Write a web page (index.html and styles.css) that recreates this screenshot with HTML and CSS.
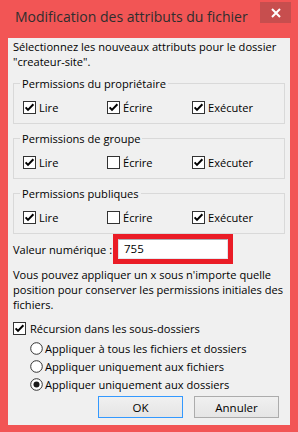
FILE: index.html
```html
<!DOCTYPE html>
<html lang="fr">
<head>
<meta charset="utf-8">
<title>Modification des attributs du fichier</title>
<link rel="stylesheet" href="styles.css">
</head>
<body>
<div class="window">
  <div class="titlebar">
    <div class="title">Modification des attributs du fichier</div>
    <div class="close"><svg width="10" height="10" viewBox="0 0 10 10"><path d="M1 1 L9 9 M9 1 L1 9" stroke="#fff" stroke-width="2" fill="none"/></svg></div>
  </div>
  <div class="client">
    <p class="intro">Sélectionnez les nouveaux attributs pour le dossier "createur-site".</p>

    <fieldset class="group">
      <legend>Permissions du propriétaire</legend>
      <div class="row">
        <span class="opt"><span class="cb"><svg width="13" height="13" viewBox="0 0 13 13"><rect x="0.5" y="0.5" width="12" height="12" fill="#fff" stroke="#333"/><path d="M2.6 6.4 L5 8.9 L10.4 3.2" stroke="#000" stroke-width="2" fill="none"/></svg></span>Lire</span>
        <span class="opt"><span class="cb"><svg width="13" height="13" viewBox="0 0 13 13"><rect x="0.5" y="0.5" width="12" height="12" fill="#fff" stroke="#333"/><path d="M2.6 6.4 L5 8.9 L10.4 3.2" stroke="#000" stroke-width="2" fill="none"/></svg></span>Écrire</span>
        <span class="opt"><span class="cb"><svg width="13" height="13" viewBox="0 0 13 13"><rect x="0.5" y="0.5" width="12" height="12" fill="#fff" stroke="#333"/><path d="M2.6 6.4 L5 8.9 L10.4 3.2" stroke="#000" stroke-width="2" fill="none"/></svg></span>Exécuter</span>
      </div>
    </fieldset>

    <fieldset class="group">
      <legend>Permissions de groupe</legend>
      <div class="row">
        <span class="opt"><span class="cb"><svg width="13" height="13" viewBox="0 0 13 13"><rect x="0.5" y="0.5" width="12" height="12" fill="#fff" stroke="#333"/><path d="M2.6 6.4 L5 8.9 L10.4 3.2" stroke="#000" stroke-width="2" fill="none"/></svg></span>Lire</span>
        <span class="opt"><span class="cb"><svg width="13" height="13" viewBox="0 0 13 13"><rect x="0.5" y="0.5" width="12" height="12" fill="#fff" stroke="#333"/></svg></span>Écrire</span>
        <span class="opt"><span class="cb"><svg width="13" height="13" viewBox="0 0 13 13"><rect x="0.5" y="0.5" width="12" height="12" fill="#fff" stroke="#333"/><path d="M2.6 6.4 L5 8.9 L10.4 3.2" stroke="#000" stroke-width="2" fill="none"/></svg></span>Exécuter</span>
      </div>
    </fieldset>

    <fieldset class="group">
      <legend>Permissions publiques</legend>
      <div class="row">
        <span class="opt"><span class="cb"><svg width="13" height="13" viewBox="0 0 13 13"><rect x="0.5" y="0.5" width="12" height="12" fill="#fff" stroke="#333"/><path d="M2.6 6.4 L5 8.9 L10.4 3.2" stroke="#000" stroke-width="2" fill="none"/></svg></span>Lire</span>
        <span class="opt"><span class="cb"><svg width="13" height="13" viewBox="0 0 13 13"><rect x="0.5" y="0.5" width="12" height="12" fill="#fff" stroke="#333"/></svg></span>Écrire</span>
        <span class="opt"><span class="cb"><svg width="13" height="13" viewBox="0 0 13 13"><rect x="0.5" y="0.5" width="12" height="12" fill="#fff" stroke="#333"/><path d="M2.6 6.4 L5 8.9 L10.4 3.2" stroke="#000" stroke-width="2" fill="none"/></svg></span>Exécuter</span>
      </div>
    </fieldset>

    <div class="value-row">
      <span class="value-label">Valeur numérique :</span>
      <span class="highlight"><span class="field">755</span></span>
    </div>

    <p class="note">Vous pouvez appliquer un x sous n'importe quelle position pour conserver les permissions initiales des fichiers.</p>

    <div class="recurse"><span class="cb"><svg width="13" height="13" viewBox="0 0 13 13"><rect x="0.5" y="0.5" width="12" height="12" fill="#fff" stroke="#333"/><path d="M2.6 6.4 L5 8.9 L10.4 3.2" stroke="#000" stroke-width="2" fill="none"/></svg></span>Récursion dans les sous-dossiers</div>

    <div class="radios">
      <div class="radio"><span class="rb"><svg width="13" height="13" viewBox="0 0 13 13"><circle cx="6.5" cy="6.5" r="5.8" fill="#fff" stroke="#333"/></svg></span>Appliquer à tous les fichiers et dossiers</div>
      <div class="radio"><span class="rb"><svg width="13" height="13" viewBox="0 0 13 13"><circle cx="6.5" cy="6.5" r="5.8" fill="#fff" stroke="#333"/></svg></span>Appliquer uniquement aux fichiers</div>
      <div class="radio"><span class="rb"><svg width="13" height="13" viewBox="0 0 13 13"><circle cx="6.5" cy="6.5" r="5.8" fill="#fff" stroke="#333"/><circle cx="6.5" cy="6.5" r="3" fill="#1a1a1a"/></svg></span>Appliquer uniquement aux dossiers</div>
    </div>

    <div class="buttons">
      <button class="btn default">OK</button>
      <button class="btn">Annuler</button>
    </div>
  </div>
</div>
</body>
</html>
```
FILE: styles.css
```css
html, body {
  margin: 0;
  padding: 0;
}
body {
  background: #f25555;
  font-family: "Open Sans", "Noto Sans", sans-serif;
  font-size: 11.1px;
  color: #000;
}
.window {
  width: 298px;
  height: 432px;
  background: #f25555;
  display: flex;
  flex-direction: column;
}
.titlebar {
  height: 38px;
  display: flex;
  justify-content: space-between;
  align-items: flex-start;
}
.title {
  font-size: 14px;
  line-height: 20px;
  color: #2e2e2e;
  padding: 7px 0 0 15px;
  white-space: nowrap;
}
.close {
  width: 31px;
  height: 21px;
  margin: 2px 7px 0 0;
  background: #c74e4e;
  display: flex;
  align-items: center;
  justify-content: center;
}
.close svg { display: block; }
.client {
  margin: 0 8px;
  height: 387px;
  background: #f0f0f0;
  padding: 1px 5px 0 5px;
  box-sizing: border-box;
  line-height: 15px;
}
.intro {
  margin: 0;
}
.group {
  margin: 7px 0 0 0;
  border: 1px solid #d9d9d9;
  padding: 9px 6px 8px 9px;
  min-width: 0;
}
.group legend {
  padding: 0 2px;
  margin-left: -3px;
  line-height: 15px;
}
.row {
  display: flex;
  height: 15px;
}
.opt {
  display: flex;
  align-items: center;
  width: 84px;
  white-space: nowrap;
}
.opt:nth-child(2) { width: 85px; }
.cb, .rb {
  display: inline-flex;
  width: 13px;
  height: 13px;
  margin-right: 3px;
  flex: none;
}
.cb svg, .rb svg { display: block; }
.value-row {
  display: flex;
  align-items: center;
  height: 30px;
}
.value-label {
  width: 100px;
  flex: none;
}
.highlight {
  border: 5px solid #ea1c26;
  width: 120px;
  height: 30px;
  box-sizing: border-box;
  display: flex;
}
.field {
  flex: 1;
  background: #fff;
  border: 1px solid #abadb3;
  border-left-color: #e2e3ea;
  border-right-color: #e2e3ea;
  border-bottom-color: #e3e9ef;
  padding-left: 5px;
  line-height: 18px;
  font-size: 11.5px;
}
.note {
  margin: 3px 0 0 0;
}
.recurse {
  margin-top: 9px;
  display: flex;
  align-items: center;
  height: 15px;
}
.recurse .cb { margin-right: 4px; }
.radios {
  margin-top: 3px;
  padding-left: 17px;
}
.radio {
  display: flex;
  align-items: center;
  height: 18px;
  white-space: nowrap;
}
.radio .rb { margin-right: 2px; }
.buttons {
  margin-top: 3px;
  display: flex;
  justify-content: flex-end;
  gap: 11px;
  padding-right: 6px;
}
.btn {
  width: 85px;
  height: 22px;
  font-family: "Open Sans", "Noto Sans", sans-serif;
  font-size: 11.5px;
  color: #000;
  background: linear-gradient(#f0f0f0, #e5e5e5);
  border: 1px solid #acacac;
  padding: 0;
  margin: 0;
}
.btn.default {
  border-color: #3399ff;
}
```
